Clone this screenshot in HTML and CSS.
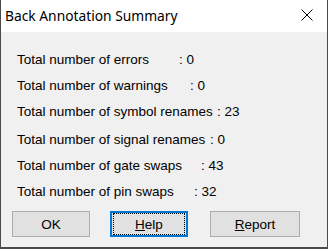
FILE: index.html
```html
<!DOCTYPE html>
<html lang="en">
<head>
    <meta charset="UTF-8">
    <title>Back Annotation Summary</title>
    <link rel="stylesheet" href="styles.css">
</head>
<body>
    <div class="dialog">
        <div class="titlebar">
            <span class="title">Back Annotation Summary</span>
            <svg class="close" width="12" height="12" viewBox="0 0 12 12">
                <path d="M0.5 0.5 L11.5 11.5 M11.5 0.5 L0.5 11.5" stroke="#000" stroke-width="1" fill="none"/>
            </svg>
        </div>
        <div class="content">
            <div class="rows">
                <div class="row"><span class="label errors">Total number of errors</span>: 0</div>
                <div class="row"><span class="label warnings">Total number of warnings</span>: 0</div>
                <div class="row"><span class="label symbol">Total number of symbol renames</span>: 23</div>
                <div class="row sig"><span class="label signal">Total number of signal renames</span>: 0</div>
                <div class="row"><span class="label gate">Total number of gate swaps</span>: 43</div>
                <div class="row"><span class="label pin">Total number of pin swaps</span>: 32</div>
            </div>
            <div class="buttons">
                <button class="btn ok">OK</button>
                <button class="btn help"><span class="focus-ring"><u>H</u>elp</span></button>
                <button class="btn report"><u>R</u>eport</button>
            </div>
        </div>
    </div>
</body>
</html>
```

FILE: styles.css
```css
* {
    margin: 0;
    padding: 0;
    box-sizing: border-box;
}
body {
    width: 328px;
    height: 249px;
    overflow: hidden;
    background: #f0f0f0;
}
.dialog {
    width: 328px;
    height: 249px;
    border: 1px solid #4a4a4a;
    border-top: none;
    border-bottom-width: 2px;
    display: flex;
    flex-direction: column;
}
.titlebar {
    height: 32px;
    background: #fff;
    display: flex;
    align-items: center;
    justify-content: space-between;
    padding: 0 14px 2px 4px;
}
.title {
    font-family: "Noto Sans", sans-serif;
    font-size: 13.8px;
    color: #000;
}
.close {
    display: block;
}
.content {
    flex: 1;
    background: #f0f0f0;
    padding: 20px 0 0 16px;
    font-family: "Liberation Sans", Arial, sans-serif;
    font-size: 13.5px;
    color: #000;
}
.row {
    white-space: pre;
    height: 26px;
    line-height: 16px;
}
.row.sig {
    margin-top: 2px;
}
.label {
    display: inline-block;
}
.errors { width: 162px; }
.warnings { width: 173px; }
.symbol { width: 200px; }
.signal { width: 193px; }
.gate { width: 184px; }
.pin { width: 177px; }
.buttons {
    display: flex;
    margin-top: 1px;
}
.btn {
    height: 26px;
    background: #e1e1e1;
    border: 1px solid #adadad;
    font-family: "Liberation Sans", Arial, sans-serif;
    font-size: 13.5px;
    color: #000;
}
.ok {
    width: 78px;
    margin-left: -5px;
}
.help {
    width: 78px;
    margin-left: 20px;
    border: 2px solid #0078d7;
}
.focus-ring {
    display: flex;
    align-items: center;
    justify-content: center;
    height: 100%;
    border: 1px dotted #000;
    margin: 0 1px;
}
.report {
    width: 90px;
    margin-left: 22px;
}
```
